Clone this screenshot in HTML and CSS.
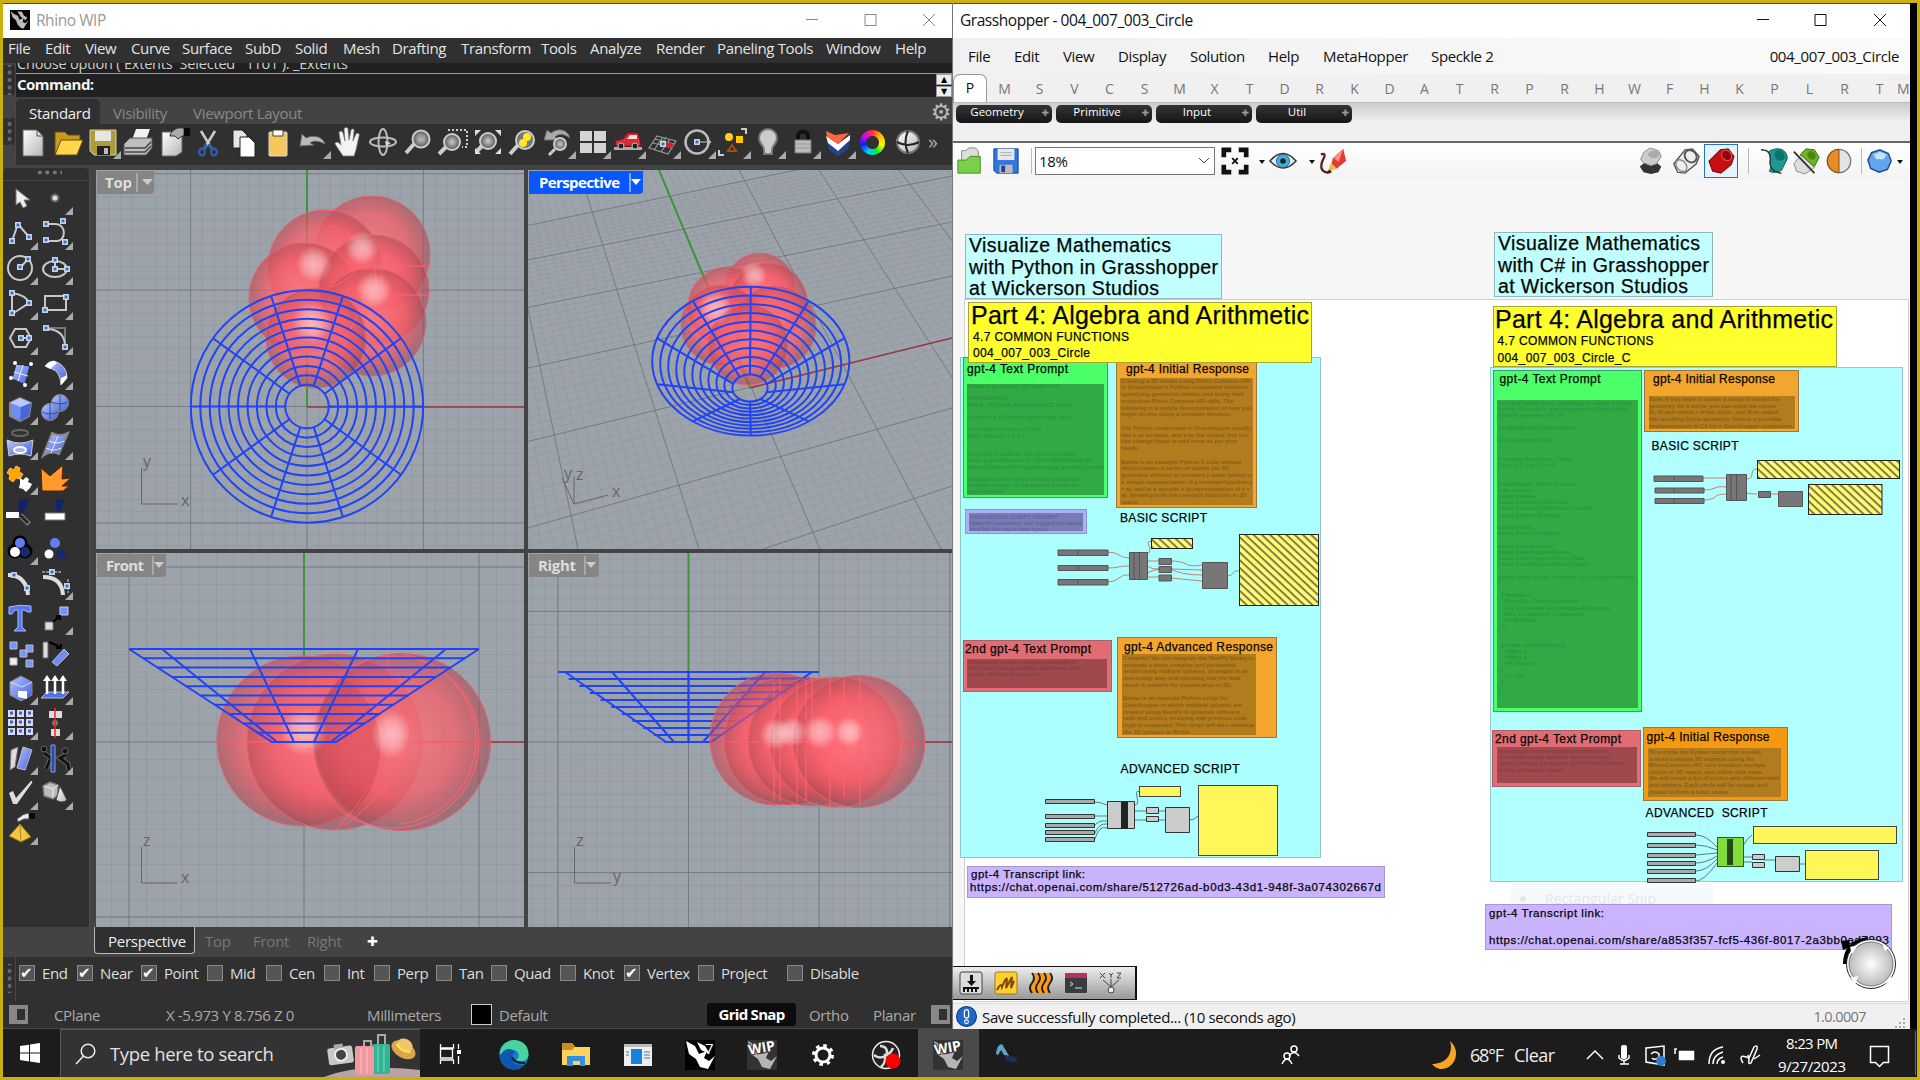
FILE: index.html
```html
<!DOCTYPE html>
<html lang="en">
<head>
<meta charset="utf-8">
<title>Rhino WIP and Grasshopper</title>
<link rel="stylesheet" href="styles.css">
</head>
<body>
<svg width="0" height="0" class="defs">
<defs>
<linearGradient id="gBlue" x1="0" y1="0" x2="1" y2="1"><stop offset="0" stop-color="#b9c6ff"/><stop offset="1" stop-color="#3f5fdc"/></linearGradient>
<linearGradient id="gGrey" x1="0" y1="0" x2="1" y2="1"><stop offset="0" stop-color="#fff"/><stop offset="1" stop-color="#b5b5b5"/></linearGradient>
<radialGradient id="gLens"><stop offset="0" stop-color="#ccc"/><stop offset="1" stop-color="#555"/></radialGradient>
<radialGradient id="ball" cx=".48" cy=".48" r=".54"><stop offset="0" stop-color="#ff7a83" stop-opacity=".8"/><stop offset=".6" stop-color="#f65e69" stop-opacity=".75"/><stop offset=".84" stop-color="#c9505b" stop-opacity=".68"/><stop offset="1" stop-color="#7e4951" stop-opacity=".5"/></radialGradient>
<radialGradient id="shine"><stop offset="0" stop-color="#fff" stop-opacity=".5"/><stop offset=".5" stop-color="#fff" stop-opacity=".35"/><stop offset="1" stop-color="#fff" stop-opacity="0"/></radialGradient>
<pattern id="hatch" width="6" height="5.6" patternUnits="userSpaceOnUse" patternTransform="rotate(43)"><rect width="6" height="5.6" fill="#ffff70"/><rect width="6" height="2" fill="#857850"/></pattern>
<symbol id="fly" viewBox="0 0 36 36"><path d="M36 27v8h-8z" fill="#aaa"/></symbol>
<g id="k"><rect x="-2.2" y="-2.2" width="4.400" height="4.400" fill="#4a68a8" stroke="#c7dcff" stroke-width="1.500"/></g>
<g id="rhino"><rect width="30" height="35"/><path class="rh" d="M1 2l3 11 5 5 2 7 5 6 4 2 8-15-5 5-4-2 1-7-6 3-2-7-6-3z"/><path class="rh" d="M11 2l5 10 7 6 3-5-5-3-3-7z"/></g>
</defs>
</svg>
<div class="screen">
<div class="windows">
<section class="rhino">
  <header class="titlebar dim"><svg class="app" width="20" height="20" viewBox="0 0 30 35" preserveAspectRatio="none"><use href="#rhino"/></svg><span class="name">Rhino WIP</span>
    <svg class="winbtn" width="130" height="20" viewBox="0 0 130 20"><path d="M2 9.500h12M61 4.500h11v11h-11zM119 4l12 12M131 4l-12 12"/></svg></header>
  <nav class="rmenu"><span>File</span><span>Edit</span><span>View</span><span>Curve</span><span>Surface</span><span>SubD</span><span>Solid</span><span>Mesh</span><span>Drafting</span><span>Transform</span><span>Tools</span><span>Analyze</span><span>Render</span><span>Paneling Tools</span><span>Window</span><span>Help</span></nav>
  <div class="cmd"><div class="dots"></div><div class="cmdbox"><div class="history"><span>Choose option ( Extents&nbsp; Selected&nbsp;&nbsp; 1To1 ): _Extents</span></div><div class="prompt"><b>Command:</b><div class="spin"><i>▲</i><i>▼</i></div></div></div></div>
  <div class="rtool"><div class="dots"></div><div class="rt">
    <div class="rtabs"><span class="on">Standard</span><span>Visibility</span><span>Viewport Layout</span><b>⚙</b></div>
    <div class="ricons">
<svg viewBox="0 0 36 36"><path d="M8 6h14l6 6v20H8z" fill="url(#gGrey)" stroke="#666"/><path d="M22 6v6h6" fill="none" stroke="#555"/></svg>
<svg viewBox="0 0 36 36"><path d="M5 30V8h10l3 3h12v5" fill="#c99a20" stroke="#694c00"/><path d="M5 31l6-15h22l-6 15z" fill="#ffd64c" stroke="#694c00"/></svg>
<svg viewBox="0 0 36 36"><path d="M5 6h26v25H9l-4-4z" fill="#ac9d3c" stroke="#d5d0a0"/><path d="M10 7h16v10H10z" fill="#e5e5e5"/><path d="M12 22h13v9H12z" fill="#222"/><path d="M19 24h4v6h-4z" fill="#bbb"/><use href="#fly"/></svg>
<svg viewBox="0 0 36 36"><path d="M12 16l4-11h14l-4 11z" fill="#f2f2f2"/><path d="M4 20l6-6h22v10l-6 7H4z" fill="#bdbdbd" stroke="#555"/><path d="M5 24h20l6-6M5 28h20l6-6" stroke="#444" stroke-width="1.500" fill="none"/></svg>
<svg viewBox="0 0 36 36"><path d="M7 8h12l8 3v17l-6 4H7z" fill="url(#gGrey)" stroke="#666"/><path d="M15 12c1-6 8-9 12-8h2v8h-2l-4 3-3-3z" fill="#aaa" stroke="#333"/><path d="M29 4h6v8h-6z" fill="#0a0a0a"/></svg>
<svg viewBox="0 0 36 36"><path d="M11 7l11 18M25 7L14 25" stroke="#ccc" stroke-width="2.500"/><path d="M16 20l-2 5M19 20l3 5" stroke="#2f5caa" stroke-width="3"/><ellipse cx="12" cy="28" rx="2.800" ry="3.500" fill="none" stroke="#2f5caa" stroke-width="2.500"/><ellipse cx="24" cy="28" rx="2.800" ry="3.500" fill="none" stroke="#2f5caa" stroke-width="2.500"/></svg>
<svg viewBox="0 0 36 36"><path d="M8 6h9l5 5v13H8z" fill="#e6e6e6" stroke="#222"/><path d="M15 13h9l6 6v14H15z" fill="#fff" stroke="#222"/></svg>
<svg viewBox="0 0 36 36"><rect x="9" y="8" width="18" height="24" rx="1" fill="#f6c75a" stroke="#d9d9d9"/><path d="M13 6h10v6H13z" fill="#fff" stroke="#444"/></svg>
<svg viewBox="0 0 36 36"><path d="M5 22l2-12 4 4c8-4 17-1 19 6-6-3-11-4-15-1l4 2z" fill="#bbb" stroke="#666"/><use href="#fly"/></svg>
<svg viewBox="0 0 36 36"><path d="M13 32l-8-12c0-3 4-2 6 1l-2-12c1-3 3-2 4 0l2 8-1-12c1-2 4-2 4 0l1 11 2-10c1-2 4-1 3 1l-1 10 3-7c2-2 4 0 3 2l-3 14-2 6z" fill="#f3f3f3" stroke="#777" stroke-width=".8"/></svg>
<svg viewBox="0 0 36 36" fill="none" stroke="#bbb" stroke-width="2"><ellipse cx="18" cy="18" rx="13" ry="4.500"/><ellipse cx="18" cy="18" rx="4.500" ry="13"/><path d="M20 17l6 2-5 3z" fill="#ddd" stroke="none"/></svg>
<svg viewBox="0 0 36 36"><path d="M14 20L6 29" stroke="#ccc" stroke-width="4"/><circle cx="21" cy="15" r="8.500" fill="url(#gLens)" stroke="#ccc" stroke-width="2"/><path d="M17 18h8M17 13h8M21 10v6" stroke="#999"/></svg>
<svg viewBox="0 0 36 36"><path d="M11 23l-7 7" stroke="#ccc" stroke-width="4"/><circle cx="17" cy="18" r="8" fill="url(#gLens)" stroke="#ccc" stroke-width="2"/><path d="M13 6h19v17h-5" fill="none" stroke="#ccc" stroke-width="2" stroke-dasharray="2 2"/></svg>
<svg viewBox="0 0 36 36"><path d="M12 22l-6 6" stroke="#ccc" stroke-width="4"/><circle cx="18" cy="17" r="8" fill="url(#gLens)" stroke="#ccc" stroke-width="2"/><path d="M5 6h6l-6 6zM25 6h6v6zM31 24v6h-6zM5 24v6h6z" fill="#ddd"/></svg>
<svg viewBox="0 0 36 36"><path d="M13 21L5 30" stroke="#ccc" stroke-width="4"/><circle cx="20" cy="16" r="9" fill="#777" stroke="#ccc" stroke-width="2"/><circle cx="22" cy="13" r="4" fill="#ffe72e"/><circle cx="18" cy="19" r="4" fill="#ffe72e"/></svg>
<svg viewBox="0 0 36 36"><path d="M4 16l3-10 4 3c8-6 17-3 19 5-6-4-11-5-15-1l3 3z" fill="#aaa" stroke="#666"/><path d="M15 25l-6 6" stroke="#ccc" stroke-width="3"/><circle cx="20" cy="20" r="6" fill="url(#gLens)" stroke="#ccc" stroke-width="2"/><use href="#fly"/></svg>
<svg viewBox="0 0 36 36"><path d="M5 7h12v10H5zM19 7h12v10H19zM5 19h12v10H5zM19 19h12v10H19z" fill="#d4d4d4"/><use href="#fly"/></svg>
<svg viewBox="0 0 36 36"><path d="M4 23h28v3H4z" fill="#aaa"/><path d="M5 17l8-2 5-6h10l2 7 1 6H6z" fill="#d82d36" stroke="#84141b"/><path d="M17 15l3-4h7v4z" fill="#edd"/><circle cx="11" cy="22" r="3" fill="#222" stroke="#bbb"/><circle cx="25" cy="22" r="3" fill="#222" stroke="#bbb"/><use href="#fly"/></svg>
<svg viewBox="0 0 36 36"><path d="M12 12l19 5-8 13L4 24zM8 19l20 5M10 15l19 5M18 13l-9 13M25 15l-9 13" fill="none" stroke="#999" stroke-width="1.200"/><path d="M20 20l8 2" stroke="#c22" stroke-width="4"/><path d="M18 18l3-5" stroke="#3a3" stroke-width="2"/><use href="#k" x="18" y="20"/><use href="#fly"/></svg>
<svg viewBox="0 0 36 36"><circle cx="17" cy="18" r="11.500" fill="none" stroke="#bbb" stroke-width="2.500"/><path d="M18 18h13m-4-3l4 3-4 3" fill="none" stroke="#bcd"/><use href="#k" x="17" y="18"/><use href="#fly"/></svg>
<svg viewBox="0 0 36 36"><circle cx="14" cy="13" r="4" fill="#ffd31a"/><path d="M21 12h7v7h-7z" fill="#ffc800"/><path d="M17 21l4 6h-8z" fill="none" stroke="#a64b16" stroke-width="2"/><path d="M26 5h5v5M4 26v5h5" fill="none" stroke="#ccc" stroke-width="2"/><use href="#fly"/></svg>
<svg viewBox="0 0 36 36"><path d="M14 26c0-5-5-6-5-12a9 9 0 0118 0c0 6-5 7-5 12v4h-8z" fill="#ccc" stroke="#777" stroke-width="2"/><use href="#fly"/></svg>
<svg viewBox="0 0 36 36"><path d="M13 17v-5c0-6 10-6 10 0v5" fill="none" stroke="#111" stroke-width="4"/><path d="M10 16h16v13H10z" fill="#bbb" stroke="#777"/><path d="M11 20h14M11 24h14" stroke="#999"/><use href="#fly"/></svg>
<svg viewBox="0 0 36 36"><path d="M7 18l11 9 12-11-2 9-10 7-9-6z" fill="#244491"/><path d="M6 12l12 8 12-9v5L18 27 8 19z" fill="#fff"/><path d="M6 7l9 4 14-2-11 11-11-7z" fill="#ff6540"/><use href="#fly"/></svg>
<div class="wheelcell"><i class="wheel"></i></div>
<svg viewBox="0 0 36 36"><circle cx="18" cy="18" r="11" fill="url(#gGrey)" stroke="#777" stroke-width="2"/><path d="M7 18q11 6 22 0M18 7q-5 11 0 22" fill="none" stroke="#222" stroke-width="2"/></svg>
<em>»</em>
    </div></div></div>
  <div class="rbody">
   <aside><div class="hdots"></div><div class="sicons">
<svg viewBox="0 0 36 36"><path d="M14 9v16l4-3 3 6 4-2-3-6h6z" fill="#eee" stroke="#777"/></svg>
<svg viewBox="0 0 36 36"><circle cx="18" cy="18" r="3.500" fill="#ddd" stroke="#666" stroke-width="2"/><use href="#fly"/></svg>
<svg viewBox="0 0 36 36"><path d="M10 26l6-17 11 13" class="ln"/><use href="#k" x="10" y="26"/><use href="#k" x="16" y="10"/><use href="#k" x="27" y="22"/><use href="#fly"/></svg>
<svg viewBox="0 0 36 36"><path d="M9 9h9c12 0 11 17 2 17H9" class="ln"/><use href="#k" x="9" y="9"/><use href="#k" x="26" y="6"/><use href="#k" x="9" y="25"/><use href="#k" x="28" y="27"/><use href="#fly"/></svg>
<svg viewBox="0 0 36 36"><circle cx="18" cy="18" r="12" class="ln"/><path d="M18 18l8-9" class="ln"/><use href="#k" x="18" y="17"/><use href="#k" x="26" y="9"/><use href="#fly"/></svg>
<svg viewBox="0 0 36 36"><ellipse cx="18" cy="19" rx="12" ry="8" class="ln"/><path d="M18 19V11M18 19h11" class="ln"/><use href="#k" x="18" y="10"/><use href="#k" x="18" y="19"/><use href="#k" x="30" y="19"/><use href="#fly"/></svg>
<svg viewBox="0 0 36 36"><path d="M10 8q14 2 17 10L10 29z" class="ln"/><use href="#k" x="10" y="8"/><use href="#k" x="27" y="18"/><use href="#k" x="10" y="28"/><use href="#fly"/></svg>
<svg viewBox="0 0 36 36"><path d="M8 11h21v14H8z" class="ln"/><use href="#k" x="29" y="12"/><use href="#k" x="8" y="25"/><use href="#fly"/></svg>
<svg viewBox="0 0 36 36"><path d="M13 9h11l5 9-5 9H13l-5-9z" class="ln"/><path d="M19 18h8" class="ln"/><use href="#k" x="19" y="18"/><use href="#k" x="27" y="18"/><use href="#fly"/></svg>
<svg viewBox="0 0 36 36"><path d="M9 8h19v18" fill="none" stroke="#777" stroke-width="2"/><path d="M9 9c12 0 19 6 19 18" class="ln"/><use href="#k" x="9" y="8"/><use href="#k" x="28" y="27"/><use href="#fly"/></svg>
<svg viewBox="0 0 36 36"><path d="M14 9l14 2-5 19-13-6z" fill="url(#gBlue)" stroke="#222"/><path d="M12 17l14 4M21 10l-5 16" stroke="#eef"/><g fill="#fff"><circle cx="13" cy="8" r="2"/><circle cx="29" cy="9" r="2"/><circle cx="9" cy="23" r="2"/><circle cx="23" cy="30" r="2"/></g><use href="#fly"/></svg>
<svg viewBox="0 0 36 36"><path d="M8 11q4-5 9-5 13 4 13 17l-6 7q-1-14-9-16z" fill="url(#gBlue)" stroke="#ccc"/><path d="M8 11q4-5 9-5l3 2-7 6zM24 23l6-3v3l-6 7z" fill="#fff"/><use href="#fly"/></svg>
<svg viewBox="0 0 36 36"><path d="M8 13l10-5 11 5-2 13-9 5-10-5z" fill="#6d8df5" stroke="#888" stroke-width="2"/><path d="M8 13l11 4 10-4-11-5z" fill="#b9caff"/><path d="M19 17l10-4-2 13-9 5z" fill="#4568d8"/><use href="#fly"/></svg>
<svg viewBox="0 0 36 36"><circle cx="23" cy="13" r="8.500" fill="url(#gBlue)" stroke="#888"/><circle cx="13" cy="22" r="8.500" fill="url(#gBlue)" stroke="#888"/><path d="M15 12q8 4 16 0M5 22q8 4 16 0M23 5v16M13 14v16" fill="none" stroke="#33508e"/><use href="#fly"/></svg>
<svg viewBox="0 0 36 36"><ellipse cx="18" cy="8" rx="8" ry="3" fill="none" stroke="#666" stroke-width="2"/><path d="M5 15q13 6 26 0l-2 16q-11-4-22 0z" fill="url(#gBlue)" stroke="#ccc"/><ellipse cx="18" cy="25" rx="6" ry="3" fill="#a9b4e8" stroke="#fff" stroke-width="2"/><use href="#fly"/></svg>
<svg viewBox="0 0 36 36"><path d="M15 8q8 4 16 0L22 29q-8-4-16 2z" fill="url(#gBlue)" stroke="#888" stroke-width="2"/><path d="M12 16q8 4 15 0M9 23q8 4 15 0M21 11l-7 17" fill="none" stroke="#eef"/><use href="#fly"/></svg>
<svg viewBox="0 0 36 36"><path d="M8 8l4 2 2-4 4 2-1 4 4 2-3 5-4-1-3 4-4-3 1-4-3-2z" fill="#ffa600" stroke="#fb5"/><path d="M18 18l3 2 3-3 3 2-1 3 4 2-2 4-4 4-3-3-4-1 1-4z" fill="#fff"/><use href="#fly"/></svg>
<svg viewBox="0 0 36 36"><path d="M4 8l9 8L26 5l-1 14 9-1-9 8 7 0-6 5H5z" fill="#ff9a2b" stroke="#5c1e00"/></svg>
<svg viewBox="0 0 36 36"><path d="M17 4h10l-6 15h-5z" fill="#12236b"/><path d="M4 17h13v6H4z" fill="#fff"/><path d="M18 20l9 9" stroke="#888" stroke-width="5"/><path d="M18 20l8 8" stroke="#222" stroke-width="3"/></svg>
<svg viewBox="0 0 36 36"><path d="M19 4h9l-5 14h-4z" fill="#12236b"/><path d="M8 18h20v7H8z" fill="#fff" stroke="#777"/></svg>
<svg viewBox="0 0 36 36"><g stroke="#000" stroke-width="5"><circle cx="18" cy="13" r="5"/><circle cx="13" cy="21" r="5"/><circle cx="23" cy="21" r="5"/></g><circle cx="18" cy="13" r="5" fill="#6080ef"/><circle cx="13" cy="22" r="5" fill="#fff"/><circle cx="23" cy="22" r="5" fill="#18286f"/><use href="#fly"/></svg>
<svg viewBox="0 0 36 36"><circle cx="18" cy="13" r="5" fill="#6080ef"/><circle cx="12" cy="24" r="4.500" fill="#fff"/><circle cx="24" cy="24" r="5" fill="#18286f"/></svg>
<svg viewBox="0 0 36 36"><path d="M6 10q18 0 20 20" class="ln3"/><use href="#k" x="12" y="10"/><use href="#k" x="25" y="23"/></svg>
<svg viewBox="0 0 36 36"><path d="M6 12q19 0 20 18" class="ln3"/><path d="M5 7h20M31 14v14" stroke="#ddd" stroke-dasharray="3 1"/><use href="#k" x="15" y="7"/><use href="#k" x="30" y="21"/><use href="#fly"/></svg>
<svg viewBox="0 0 36 36"><path d="M7 7q11-3 22-1v6h-3l-4-2h-2v17l4 4H12l4-4V10h-3l-3 4H7z" fill="#5777ed" stroke="#a9b9ff"/></svg>
<svg viewBox="0 0 36 36"><path d="M8 22h8v8H8z" fill="#ddd" stroke="#777"/><path d="M23 7h8v8h-8z" fill="#7290fa" stroke="#ccd"/><path d="M16 22l7-6m-4 0h4v4" fill="none" stroke="#000" stroke-width="2"/><use href="#fly"/></svg>
<svg viewBox="0 0 36 36"><g fill="#7895fa" stroke="#bbc"><path d="M8 7h7v7H8zM24 10h7v7h-7zM18 15h7v7h-7zM24 25h7v7h-7z"/><path d="M8 23h7v7H8z" fill="#eee"/></g></svg>
<svg viewBox="0 0 36 36"><path d="M6 7h5v16H6z" fill="#ddd" stroke="#666"/><path d="M15 27l12-13 5 5-12 12z" fill="#6f8df6" stroke="#bbc"/><path d="M12 7l11 5m-4 1h5v-4" fill="none" stroke="#000" stroke-width="2"/></svg>
<svg viewBox="0 0 36 36"><path d="M8 12l11-6 11 6v13l-11 6-11-6z" fill="url(#gBlue)" stroke="#888"/><path d="M8 12l12 5 10-5" fill="none" stroke="#cdf"/><path d="M16 21h9v8l-9-2z" fill="#fff"/><use href="#fly"/></svg>
<svg viewBox="0 0 36 36"><path d="M4 28l6-6h22l-6 6z" fill="#5070e8" stroke="#bbc"/><path d="M10 24V9M18 24V9M26 24V9" stroke="#fff" stroke-width="2.500"/><path d="M6 11l4-6 4 6zM14 11l4-6 4 6zM22 11l4-6 4 6z" fill="#fff"/><use href="#fly"/></svg>
<svg viewBox="0 0 36 36"><path d="M6 5h7v7H6zM15 5h7v7h-7zM24 5h7v7h-7zM6 14h7v7H6zM15 14h7v7h-7zM24 14h7v7h-7zM6 23h7v7H6zM15 23h7v7h-7zM24 23h7v7h-7z" fill="#d4dafa"/><path d="M8 8h3M17 8h3M26 8h3M8 17h3M17 17h3M26 17h3M8 26h3M17 26h3M26 26h3" stroke="#4a5fb0" stroke-width="3"/><use href="#fly"/></svg>
<svg viewBox="0 0 36 36"><path d="M12 6h13v7H12zM14 24h9v7h-9z" fill="#ddd"/><circle cx="18" cy="18" r="3" fill="#777"/><path d="M18 3v30" stroke="#f22" stroke-width="1.500"/><use href="#fly"/></svg>
<svg viewBox="0 0 36 36"><path d="M9 10l7-3-3 20-5 3z" fill="#ddd" stroke="#777"/><path d="M21 7l9 3-7 20-8-2z" fill="url(#gBlue)" stroke="#bbc"/><use href="#fly"/></svg>
<svg viewBox="0 0 36 36"><g fill="none" stroke="#666" stroke-width="5"><path d="M7 13l7 5-5 11M29 15l-6 3 8 6 1 6"/></g><g fill="none" stroke="#111" stroke-width="3"><path d="M7 13l7 5-5 11M29 15l-6 3 8 6 1 6"/></g><circle cx="7" cy="9" r="3" fill="#111" stroke="#666"/><circle cx="28" cy="11" r="3" fill="#111" stroke="#666"/><path d="M14 5h4v27h-4z" fill="#2b4ba0" stroke="#8ba0d8"/><use href="#fly"/></svg>
<svg viewBox="0 0 36 36"><path d="M7 18l4-2 3 7L29 6q2 0 1 2L15 29h-4z" fill="#ddd"/><use href="#fly"/></svg>
<svg viewBox="0 0 36 36"><path d="M6 11l7-4 8 3v10l-5 4-9-3z" fill="#bbb" stroke="#777" stroke-width="1.500"/><path d="M7 11l9 3 5-4M16 14v9" fill="none" stroke="#eee"/><path d="M23 11l7 14q-5 4-11 0z" fill="url(#gGrey)" stroke="#444"/><use href="#fly"/></svg>
<svg viewBox="0 0 36 36"><path d="M15 9q7-6 12-6v6h-5l-6 3z" fill="#eee" stroke="#555"/><path d="M27 3h6v6h-6z" fill="#0a0a0a"/><path d="M18 14l11 13-10 5-12-6z" fill="#f5c542" stroke="#8a6a10"/><path d="M18 14l1 18" stroke="#b08a20"/><use href="#fly"/></svg>
   </div></aside>
   <div class="views">
<svg viewBox="96 170 428 379">
 <rect x="96" y="170" width="428" height="379" class="vbg"/><path class="minor" data-grid="307 406.5 11.64"/><path class="major" data-grid="307 406.5 116.4"/>
 <path d="M307 406V170" class="gax"/><path d="M307 407h217" class="rax"/>
 <g class="balls"><circle cx="372" cy="254" r="58"/><circle cx="325" cy="267" r="57"/><circle cx="304" cy="298" r="55"/><circle cx="374" cy="290" r="55"/><circle cx="372" cy="322" r="54"/><circle cx="316" cy="338" r="50"/></g>
 <path d="M368 247a58 58 0 01-36 40M330 226a57 57 0 0144 72M261 312a50 50 0 0098-5M348 269h34v28M372 266h57M375 295h52" class="seam"/>
 <circle cx="362" cy="248" r="17" fill="url(#shine)"/><circle cx="314" cy="264" r="18" fill="url(#shine)"/><circle cx="374" cy="290" r="18" fill="url(#shine)"/><circle cx="312" cy="322" r="20" fill="url(#shine)"/>
 <g class="wire" data-rings="307 406.5 21.7 21.7 307 406.5 116.2 116.2 18"></g>
 <path class="gnomon" d="M141.500 468v36h36"/><text class="ax" x="143" y="467">y</text><text class="ax" x="181" y="506">x</text>
 <g><path d="M97 171h57v19q0 4-4 4H97z" fill="#858585"/><path d="M137 173v19" stroke="#ccc"/><path d="M142 179h11l-5.500 6z" fill="#ccc"/><text class="vt" x="105" y="188" textLength="27">Top</text></g>
</svg>
<svg viewBox="528 170 424 379">
 <rect x="528" y="170" width="424" height="379" class="vbg"/><path class="minor" data-persp="0.1"/><path class="major" data-persp="1"/>
 <path d="M750 388L659 170" class="gax"/>
 <g class="balls"><circle cx="760" cy="288" r="35"/><circle cx="728" cy="307" r="40"/><circle cx="768" cy="302" r="39"/><circle cx="721" cy="325" r="40"/><circle cx="775" cy="327" r="41"/><circle cx="748" cy="345" r="40"/></g>
 <circle cx="754" cy="275" r="13" fill="url(#shine)"/><circle cx="715" cy="308" r="17" fill="url(#shine)"/>
 <path d="M750 388l202-50" class="rax"/>
 <g class="wire" data-rings="750 388 17.6 13.6 750.8 361.2 98.6 74.4 0"></g>
 <path class="gnomon" d="M562 478l12 26 34-9M574 504v-28"/><text class="ax" x="564" y="479">y</text><text class="ax" x="576" y="480">z</text><text class="ax" x="612" y="497">x</text>
 <g><path d="M529 171h114v19q0 4-4 4H529z" fill="#0757fa"/><path d="M630 173v19" stroke="#fff"/><path d="M631 179h10l-5 6z" fill="#fff"/><text class="vt w" x="539" y="188" textLength="81">Perspective</text></g>
</svg>
<svg viewBox="96 553 428 374">
 <rect x="96" y="553" width="428" height="374" class="vbg"/><path class="minor" data-grid="304 742 17.5"/><path class="major" data-grid="304 742 175"/>
 <path d="M304 742V553" class="gax"/><path d="M304 742h220" class="rax"/>
 <g class="balls"><circle cx="302" cy="741" r="85"/><circle cx="335" cy="742" r="88"/><circle cx="402" cy="742" r="88.500"/></g>
 <circle cx="393" cy="742" r="86" class="seam"/><path d="M217 742h274M402 654a88 88 0 0174 90 85 85 0 01-76 80M386 654q30 90-50 176M396 680q45 70-50 145" class="seam"/>
 <path d="M342 676a85 85 0 0138 66 90 90 0 01-26 70 88 88 0 01-12-136z" fill="#b53c48" opacity=".3"/>
 <circle cx="304" cy="732" r="24" fill="url(#shine)"/><ellipse cx="391" cy="734" rx="20" ry="24" fill="url(#shine)"/>
 <g class="wire" data-frustum="304 649 742 175 33"><path d="M129 649l143 93M162 649l115 93M250 649l44 93M358 649l-44 93M446 649l-115 93M479 649l-143 93"/></g>
 <path class="gnomon" d="M141.500 847v36h36"/><text class="ax" x="143" y="846">z</text><text class="ax" x="181" y="883">x</text>
 <g><path d="M97 554h69v19q0 4-4 4H97z" fill="#858585"/><path d="M153 556v19" stroke="#ccc"/><path d="M154 562h10l-5 6z" fill="#ccc"/><text class="vt" x="106" y="571" textLength="38">Front</text></g>
</svg>
<svg viewBox="528 553 424 374">
 <rect x="528" y="553" width="424" height="374" class="vbg"/><path class="minor" data-grid="688.5 742 13.06"/><path class="major" data-grid="688.5 742 130.6"/>
 <path d="M688.500 742V553" class="gax"/><path d="M688 742h264" class="rax"/>
 <g class="wire" data-frustum="688.5 672 742 130.5 24"><path d="M565 672l101 70M612 672l62 70M688.500 672v70M765 672l-62 70M812 672l-101 70"/></g>
 <g class="balls"><circle cx="776" cy="739" r="66"/><circle cx="788" cy="741" r="64"/><circle cx="812" cy="742" r="64"/><circle cx="835" cy="742" r="65"/><circle cx="859" cy="741.500" r="66"/></g>
 <path d="M711 742h214M774 682v119M780 678v124M797 680v122M806 680v120M812 678v60M830 677v128M844 678v120M860 676v130" class="seam"/>
 <circle cx="776" cy="734" r="16" fill="url(#shine)"/><circle cx="792" cy="732" r="15" fill="url(#shine)"/><circle cx="820" cy="732" r="17" fill="url(#shine)"/><circle cx="849" cy="732" r="15" fill="url(#shine)"/>
 <g class="wire" opacity=".35"><path d="M688 672h131M740 678h70M740 685h55M740 692h46M735 699h40M730 706h35M765 672l-62 70M812 672l-101 70"/></g>
 <path class="gnomon" d="M574.500 847v36h36"/><text class="ax" x="576" y="846">z</text><text class="ax" x="613" y="882">y</text>
 <g><path d="M529 554h70v19q0 4-4 4H529z" fill="#858585"/><path d="M585 556v19" stroke="#ccc"/><path d="M586 562h10l-5 6z" fill="#ccc"/><text class="vt" x="538" y="571" textLength="38">Right</text></g>
</svg>
   </div>
  </div>
  <div class="vtabs"><span class="on">Perspective</span><span>Top</span><span>Front</span><span>Right</span><b>✚</b></div>
  <div class="osnap"><div class="dots"></div><div class="checks"><label class="c">End</label><label class="c">Near</label><label class="c">Point</label><label>Mid</label><label>Cen</label><label>Int</label><label>Perp</label><label>Tan</label><label>Quad</label><label>Knot</label><label class="c">Vertex</label><label>Project</label><label>Disable</label></div></div>
  <footer class="rstatus"><i class="pane"></i><span>CPlane</span><span>X -5.973 Y 8.756 Z 0</span><span>Millimeters</span><i class="sw"></i><span>Default</span><b>Grid Snap</b><span>Ortho</span><span>Planar</span><i class="pane"></i></footer>
</section>
<section class="gh">
  <header class="titlebar"><span class="name">Grasshopper - 004_007_003_Circle</span><svg class="winbtn" width="132" height="20" viewBox="0 0 132 20"><path d="M2 9.500h12M60 4.500h11v11h-11zM119 4l12 12M131 4l-12 12"/></svg></header>
  <nav class="gmenu"><span>File</span><span>Edit</span><span>View</span><span>Display</span><span>Solution</span><span>Help</span><span>MetaHopper</span><span>Speckle 2</span><span class="r">004_007_003_Circle</span></nav>
  <div class="gtabs"><b>P</b><i>M</i><i>S</i><i>V</i><i>C</i><i>S</i><i>M</i><i>X</i><i>T</i><i>D</i><i>R</i><i>K</i><i>D</i><i>A</i><i>T</i><i>R</i><i>P</i><i>R</i><i>H</i><i>W</i><i>F</i><i>H</i><i>K</i><i>P</i><i>L</i><i>R</i><i>T</i><i>M</i></div>
  <div class="ribbon"><span>Geometry</span><span>Primitive</span><span>Input</span><span>Util</span></div>
  <div class="gtool">
<svg viewBox="0 0 30 30"><path d="M6 12V4h4l4-3h7l3 4v18H7z" fill="#ddd" stroke="#888"/><path d="M2 14h9l4-4h11v18H2z" fill="#7bd04a" stroke="#3f8d20"/></svg>
<svg viewBox="0 0 30 30"><path d="M2 2h26v26H5l-3-3z" fill="#2f76e0" stroke="#123f91"/><path d="M6 2h18v12H6z" fill="#e8e8e8"/><path d="M8 19h14v9H8z" fill="#bbb"/><path d="M10 20h4v7h-4z" fill="#223f80"/><path d="M9 6h12M9 9h12" stroke="#aaa"/></svg>
<hr><div class="combo">18%<svg width="12" height="8"><path d="M1 1l5 5 5-5" fill="none" stroke="#444"/></svg></div>
<svg viewBox="0 0 30 30"><path d="M3 11V3h8M19 3h8v8M27 19v8h-8M11 27H3v-8" fill="none" stroke="#111" stroke-width="5"/><path d="M12 12l6 6M18 12l-6 6" stroke="#111" stroke-width="2"/></svg><u></u>
<svg viewBox="0 0 30 30"><path d="M1 15Q15-1 29 15 15 30 1 15z" fill="#d8f0fb" stroke="#333" stroke-width="1.500"/><circle cx="15" cy="15" r="7" fill="#4aa9d8" stroke="#17688f"/><circle cx="15" cy="15" r="3" fill="#032"/></svg><u></u>
<svg viewBox="0 0 30 30"><path d="M2 8q6-2 3 4-6 12 2 15l5 0" fill="none" stroke="#522" stroke-width="2.500"/><path d="M12 22l3-10L26 2l3 13-10 8z" fill="#e23b31"/><path d="M16 12L26 2l-5 14z" fill="#ff8d80"/><path d="M9 27l4-10 6 6z" fill="#f2b84b"/><path d="M8 29l3-5 3 3z" fill="#411"/></svg><s></s>
<svg viewBox="0 0 30 30"><path d="M3 21l5-4h13l5 4-3 6-8 2-8-2z" fill="#333"/><path d="M7 6l7-5 9 3 3 6-5 8-6 2-8-3-3-4z" fill="#ccc" stroke="#888"/><ellipse cx="18" cy="8" rx="6" ry="4" fill="#aaa"/></svg>
<svg viewBox="0 0 30 30"><path d="M2 18L14 3l8-1 7 8-3 8-12 10-8-1z" fill="#eee" stroke="#555" stroke-width="1.500"/><ellipse cx="20" cy="10" rx="6" ry="7" transform="rotate(-40 20 10)" fill="none" stroke="#555" stroke-width="2"/><ellipse cx="10" cy="20" rx="5" ry="7" transform="rotate(-40 10 20)" fill="none" stroke="#888" stroke-width="1.500"/></svg>
<div class="sel"><svg viewBox="0 0 30 30"><path d="M2 15L14 3l9-1 6 8-3 9-11 9-9-2z" fill="#c60f12" stroke="#650000"/><ellipse cx="21" cy="9" rx="5" ry="6" transform="rotate(-40 21 9)" fill="#8e0609" stroke="#e55"/></svg></div><hr>
<svg viewBox="0 0 30 30"><path d="M9 5q8-5 15-2 6 4 5 10l-6 12q-8 4-13 1 3-4 1-9 2-7-2-12z" fill="#1a9a92" stroke="#065b57"/><path d="M1 3q11 0 10 11-2 12 12 14" fill="none" stroke="#333" stroke-width="1.500"/><ellipse cx="21" cy="9" rx="5" ry="6" transform="rotate(-40 21 9)" fill="#10706b"/></svg>
<svg viewBox="0 0 30 30"><path d="M2 18l8-10 14 14-10 7-9-3z" fill="#ddd" stroke="#888"/><path d="M9 8l6-6 9 1 5 8-5 10z" fill="#6fb324" stroke="#2e6a05"/><ellipse cx="21" cy="9" rx="4" ry="5" transform="rotate(-40 21 9)" fill="#4a8611"/><path d="M2 5l22 23" stroke="#333" stroke-width="2"/></svg>
<svg viewBox="0 0 30 30"><circle cx="15" cy="15" r="12.500" fill="#e4e4e4" stroke="#777" stroke-width="1.500"/><path d="M15 2.500a12.500 12.500 0 000 25z" fill="#e88b22" stroke="#7c4510"/></svg><hr>
<svg viewBox="0 0 30 30"><path d="M15 3l9 4 3 8-4 9-9 3-9-4-3-9 4-8z" fill="#62a5ee" stroke="#204b8a" stroke-width="1.500"/><path d="M8 8l7-3 7 3-3 5h-8z" fill="#c5e2ff"/></svg><u></u>
  </div>
  <div class="canvas">
<svg viewBox="953 180 957 823" width="957" height="823">
<defs><radialGradient id="comp"><stop offset="0" stop-color="#fff"/><stop offset="1" stop-color="#bbb"/></radialGradient></defs>
<rect x="953" y="180" width="957" height="823" fill="#f6f6f6"/><rect x="964.500" y="299.500" width="944" height="702" fill="#fff" stroke="#d0d0d0"/>
<g>
<rect x="960.500" y="357.500" width="360" height="500" fill="#acffff" stroke="#92c6c6"/><rect x="1490.500" y="367.500" width="412" height="514" fill="#b2ffff" stroke="#9bc9c9"/>
<rect x="965.500" y="234.500" width="256" height="64" fill="#c2ffff" stroke="#8db9bb"/><rect x="1494.500" y="232.500" width="218" height="64" fill="#c2ffff" stroke="#8db9bb"/>
<rect x="963.500" y="357.500" width="144" height="140" fill="#4bff68" stroke="#3e9b74"/><rect x="1116.500" y="360.500" width="140" height="147" fill="#f2a62d" stroke="#967840"/>
<rect x="968.500" y="302.500" width="343" height="60" fill="#ffff2d" stroke="#a5a53c"/><rect x="1493.500" y="306.500" width="343" height="60" fill="#ffff2d" stroke="#a5a53c"/>
<rect x="965.500" y="509.500" width="121" height="24" fill="#aab0f5" stroke="#8a94d4"/><rect x="963.500" y="640.500" width="148" height="51" fill="#e06c74" stroke="#ad5f68"/><rect x="1117.500" y="637.500" width="159" height="100" fill="#f2a62d" stroke="#967840"/>
<rect x="1493.500" y="370.500" width="148" height="341" fill="#4bff68" stroke="#3e9b74"/><rect x="1644.500" y="370.500" width="154" height="61" fill="#f2a62d" stroke="#967840"/>
<rect x="1492.500" y="730.500" width="148" height="56" fill="#e06c74" stroke="#ad5f68"/><rect x="1643.500" y="727.500" width="144" height="73" fill="#f59a10" stroke="#967840"/>
<rect x="967.500" y="866.500" width="417" height="31" fill="#cab4ff" stroke="#a796cf"/>
</g>
<g><path d="M967 384h137v111H967zM1497 400h141v308h-141z" fill="#31aa46"/><path d="M1120 378h133v127h-133zM1122 654h134v81h-134zM1649 396h146v33h-146zM1648 748h133v49h-133z" fill="#b27c1e"/><path d="M969 513h114v18H969z" fill="#777cb4"/><path d="M967 659h140v29H967zM1497 747h140v36h-140z" fill="#9f494f"/></g>
<g class="t">
<g style="font-size:19.500px"><text x="969" y="252" textLength="202">Visualize Mathematics</text><text x="969" y="273.500" textLength="249">with Python in Grasshopper</text><text x="969" y="295" textLength="190">at Wickerson Studios</text><text x="1498" y="250" textLength="202">Visualize Mathematics</text><text x="1498" y="271.500" textLength="211">with C# in Grasshopper</text><text x="1498" y="293" textLength="190">at Wickerson Studios</text></g>
<g style="font-size:25px"><text x="971" y="324" textLength="338">Part 4: Algebra and Arithmetic</text><text x="1495" y="328" textLength="338">Part 4: Algebra and Arithmetic</text></g>
<g style="font-size:12px"><text x="973" y="340.500" textLength="156">4.7 COMMON FUNCTIONS</text><text x="973" y="357" textLength="117">004_007_003_Circle</text><text x="1497.500" y="345" textLength="156">4.7 COMMON FUNCTIONS</text><text x="1497.500" y="361.500" textLength="133">004_007_003_Circle_C</text>
<text x="967" y="373" textLength="101">gpt-4 Text Prompt</text><text x="1126" y="373" textLength="123">gpt-4 Initial Response</text><text x="1120" y="522" textLength="87">BASIC SCRIPT</text>
<text x="965" y="653" textLength="126">2nd gpt-4 Text Prompt</text><text x="1124" y="650.500" textLength="149">gpt-4 Advanced Response</text><text x="1120.500" y="773" textLength="119">ADVANCED SCRIPT</text>
<text x="1499.500" y="383" textLength="101">gpt-4 Text Prompt</text><text x="1653" y="383" textLength="122">gpt-4 Initial Response</text><text x="1651.500" y="450" textLength="87">BASIC SCRIPT</text>
<text x="1495" y="743" textLength="126">2nd gpt-4 Text Prompt</text><text x="1646.500" y="741" textLength="123">gpt-4 Initial Response</text><text x="1645.500" y="817" textLength="122" xml:space="preserve">ADVANCED  SCRIPT</text></g>
<g style="font-size:11.500px"><text x="971" y="878" textLength="114">gpt-4 Transcript link:</text><text x="970" y="891" textLength="411">https://chat.openai.com/share/512726ad-b0d3-43d1-948f-3a074302667d</text></g>
</g>
<g class="fine og"><g data-lines="1121 382.5 6.76 131">Creating a 3D model using Rhino Common API|in Grasshopper's Python component involves|specifying geometric entities and using their|respective Rhino Common API calls. The|following is a simple demonstration of how you|might do this using a constant function.||The Python component in Grasshopper usually|has x as an input, and a as the output, but you|can change these or add more as per your|needs.||Below is an example Python 3 code snippet|which creates a series of planes (as 3D|geometric entities) at constant y value (which is|a simple representation of a constant function y|= a), and at a specific x (a representation of x =|a), showing both are constant functions in 3D|space.</g>
<g data-lines="1123 660 6.7 131">Certainly! We can integrate the RemPy library to|generate a more complex and parametric|model using multiple spheres, arranged in an|interesting way, and ensuring that the final|result is suitable for visualization in 3D.||Below is an example Python script for|Grasshopper in which multiple spheres are|created using RemPy to generate different|radii and colors, ensuring that previous code|logic is respected. This script will also visualize|the 3D spheres in Rhino.</g>
<g data-lines="1649 401 6.7 145">Sure, if you want to create a script to model the|geometry for a circle, you can input the center|(h, k) and radius r of the circle, and then output|the resulting Circle geometry. Here is a possible|implementation in C# for a Grasshopper component.</g>
<g data-lines="1649 754 6.6 130">To provide the Python script that models|a more complex 3D example using the|RhinoCommon API, let's visualize multiple|circles in 3D space, and utilize data trees.|We will create a list of circles with different radii|and centers. Each circle will be unique and|placed to form a torus shape.</g></g>
<g class="fine gn"><g data-lines="967 388 6.2 137">Create a geometric 3D model with||MATHEMATICS|AREA, VOLUME AND SURFACE AREA||to create a 3D model specifically as an||Common Functions: Circle|Grid: original: 6 x 4 a|||In python 3 code for the python 3 editor|node in grasshopper for RhinoWIP8 using the|Rhino Common API to create unique geometry as well||Output the parts of the model to different|variable outputs of the python 3 node in|grasshopper.</g>
<g data-lines="1498 405 6.2 139">and that model there, including to create a script|for the C# node in grasshopper for Rhino8 that|models geometry for the||ALGEBRA AND ARITHMETIC||and specifically the|||Common Functions: Circle|Grid: x^2 + y^2 = r^2|||Grasshopper Script Instance|// No usings|using System;|using System.Collections;|using System.Collections.Generic;|using System.Drawing;||using Rhino;|using Rhino.Geometry;||using Grasshopper;|using Grasshopper.Kernel;|using Grasshopper.Kernel.Data;|using Grasshopper.Kernel.Types;||public class Script_Instance : GH_ScriptInstance|{||  /*Members:|    RhinoDoc RhinoDocument|    GH_Document GrasshopperDocument|    IGH_Component Component|    int Iteration|  */|||  private void RunScript(|    object x,|    object y,|    ref object a)|  {|    a = null;|  }|}</g></g>
<g class="fine bl"><g data-lines="970 518.500 6.2 112">PARAMETRIC SCRIPT PROMPT|Make this parametric and suggest the values|and list the input data types.</g></g>
<g class="fine rd"><g data-lines="968 664 6.2 137">Now create a more complex example of|the model, using multiple data trees and|script utilising list access</g><g data-lines="1498 753 6.2 137">Now create a more complex example of|the model, using multiple data trees and|script utilising list access and RhinoCommon|for the advanced visual.</g></g>
<g class="wires"><path d="M1107 552q8 0 12 3t10 3M1107 568q8 0 11-1t11-1M1107 582q8 0 12-4t10-3M1147 554q5-2 2-8t3-4M1147 561h12M1147 566q6 4 12 3M1147 573q6-3 12-4M1147 577h12M1171 561q10 0 15 3t16 1M1171 569l31 1M1171 569q10 6 31 6M1171 578l31 3M1227 576q5 0 6-3t6-2"/>
<path d="M1703 478h23M1704 490q8 0 11-2t11-1M1704 500q8 0 11-3t11-3M1746 479q6 0 6-5t5-5M1746 493q5 1 11 1M1770 494h8"/></g>
<g class="wires k"><path d="M1095 802q5 0 12 3M1095 816h12M1095 825q4-5 12-4M1095 833q4-10 12-9M1095 839q4-14 12-11M1135 805q4 0 2-8t3-5M1135 811h11M1135 820h11M1158 811h7M1158 820h7M1189 820q6 0 9-4M1696 835q10 0 21 12M1696 845q10 0 21 5M1696 855l21-2M1696 863q10 0 21-7M1696 871q10 0 21-12M1696 881q8 0 21-18M1743 846q4-8 9-11M1743 857h9M1743 862h9M1764 860h11M1799 864h6"/></g>
<g class="nodes"><path d="M1058 550h50v5.500h-50zM1058 565.500h50v5h-50zM1058 579.500h50v5.500h-50zM1129.500 552.500h18v27h-18zM1159 558.500h12.500v6H1159zM1159 566.500h12.500v6H1159zM1159 575h12.500v6H1159zM1202.500 562.500h25v26h-25zM1654 476h49v5.500h-49zM1655 488h49v5h-49zM1655 498.500h49v5h-49zM1726.500 474.500h20v26h-20zM1758.500 491.500h12v6h-12zM1778.500 491.500h24v15h-24z"/><path d="M1078 550v5M1078 566v5M1078 580v5M1134 553v26M1139.500 553v26M1674 476v5M1674 488v5M1674 498v5M1731 475v25M1736.500 475v25" stroke="#444"/></g>
<g fill="url(#hatch)" stroke="#222"><rect x="1151.500" y="538.500" width="41" height="10"/><rect x="1239.500" y="534.500" width="79" height="71"/><rect x="1757.500" y="460.500" width="142" height="18"/><rect x="1808.500" y="484.500" width="73.500" height="30"/></g>
<g fill="#fff759" stroke="#444"><rect x="1139.500" y="786.500" width="41" height="10"/><rect x="1198.500" y="785.500" width="79" height="70"/><rect x="1753.500" y="826.500" width="143" height="17"/><rect x="1805.500" y="850.500" width="73" height="29"/></g>
<g fill="#aaa" stroke="#333" stroke-width="1"><path d="M1045.500 799.500h49v4h-49zM1045.500 814.500h49v4h-49zM1045.500 823.500h49v4h-49zM1045.500 830.500h49v4h-49zM1045.500 837.500h49v4h-49zM1647.500 832.500h48v4h-48zM1647.500 843.500h48v4h-48zM1647.500 853.500h48v4h-48zM1647.500 861.500h48v4h-48zM1647.500 869.500h48v4h-48zM1647.500 878.500h48v4h-48z"/><path fill="#ccc" d="M1107.500 801.500h27v27h-27zM1146.500 807.500h12v6h-12zM1146.500 816.500h12v5h-12zM1165.500 807.500h24v25h-24zM1752.500 854.500h12v5h-12zM1752.500 862.500h12v5h-12zM1775.500 856.500h24v15h-24z"/></g>
<path d="M1121 802h7v27h-7z" fill="#222"/><rect x="1717.500" y="837.500" width="26" height="29" fill="#82dc3c" stroke="#286010"/><path d="M1727 839h6v26h-6z" fill="#254b15"/>
<rect x="1511" y="884" width="202" height="20" fill="#f5faff"/><circle cx="1523" cy="899" r="3" fill="#e1e8ec"/><text x="1545" y="904" textLength="111" class="ghost">Rectangular Snip</text>
<rect x="1485.500" y="904.500" width="406" height="45" fill="#cab4ff" stroke="#a796cf"/><g class="t" style="font-size:11.500px"><text x="1489" y="917" textLength="115">gpt-4 Transcript link:</text><text x="1489" y="944" textLength="400">https://chat.openai.com/share/a853f357-fcf5-436f-8017-2a3bb0ad7893</text></g>
<path d="M1845 964q0-22 23-25" fill="none" stroke="#000" stroke-width="4"/><path d="M1841 941l8-1 1 7-7 3z"/>
<circle cx="1871" cy="964" r="24.500" fill="#fff" stroke="#222"/><circle cx="1871" cy="964" r="22" fill="url(#comp)" stroke="#777"/><path d="M1852 954l6-9-8 2zM1882 943l3 8 4-3zM1891 975l-6 9 7-4zM1855 985l3-9-7 2z" fill="#fff"/>
</svg>
  <div class="dock">
<svg viewBox="0 0 24 24"><rect x="1" y="1" width="22" height="22" rx="2" fill="#ddd" stroke="#444"/><path d="M11 4h3v6h3l-4.500 5L8 10h3zM4 16h16v2H4zM4 18h2v3H4zM8 18h2v3H8zM12 18h2v3h-2zM16 18h2v3h-2z" fill="#111"/></svg>
<svg viewBox="0 0 24 24"><rect x="1" y="1" width="22" height="22" rx="2" fill="#ffd02b" stroke="#9a7a20"/><path d="M3 19q4-8 5-3 4-10 5-8l-1 9 6-11-1 11 3-7" fill="none" stroke="#7a4a10" stroke-width="2"/></svg>
<svg viewBox="0 0 24 24" fill="none"><path d="M4 2q4 5 0 10t0 10h16q-4-5 0-10t0-10z" fill="#ff9c16"/><path d="M3 2q4 5 0 10t0 10M9 2q4 5 0 10t0 10M15 2q4 5 0 10t0 10M21 2q4 5 0 10t0 10" stroke="#222" stroke-width="2"/></svg>
<svg viewBox="0 0 24 24"><rect x="1" y="2" width="22" height="20" rx="1" fill="#383c41"/><path d="M1 2h22v5H1z" fill="#b93060"/><path d="M6 11l3 2-3 2M11 17h7" stroke="#ddd" fill="none"/></svg>
<svg viewBox="0 0 24 24"><g fill="none" stroke="#444"><path d="M4 9l8 7 8-7M12 8v8"/><circle cx="12" cy="19" r="3" fill="#eee"/><path d="M1 2l5 5M6 2L1 7M10 2l2 2 2-2M12 4v3M18 2h4l-4 5h4"/></g></svg>
  </div>
  </div>
  <footer class="gstatus"><svg width="21" height="21" viewBox="0 0 20 20"><circle cx="10" cy="10" r="9.500" fill="#2367c5" stroke="#0b3b85"/><rect x="8" y="3.500" width="4" height="8" rx="2" fill="none" stroke="#fff" stroke-width="1.200"/><circle cx="10" cy="15" r="1.800" fill="none" stroke="#fff"/></svg><span>Save successfully completed... (10 seconds ago)</span><em>1.0.0007</em><svg class="grip" width="12" height="12" viewBox="0 0 12 12"><path d="M8 1h2v2H8zM8 5h2v2H8zM8 9h2v2H8zM4 5h2v2H4zM4 9h2v2H4zM0 9h2v2H0z" fill="#aaa"/></svg></footer>
</section>
</div>
<footer class="taskbar">
<div class="start"><svg width="20" height="20" viewBox="0 0 20 20"><path d="M0 3l9-1.300V9.500H0zM10 1.500L20 0v9.500H10zM0 10.500h9v8L0 17zM10 10.500h10V20l-10-1.500z" fill="#fff"/></svg></div>
<div class="search"><svg width="22" height="22" viewBox="0 0 22 22"><circle cx="13" cy="8" r="6.800" fill="none" stroke="#eee" stroke-width="1.500"/><path d="M8.500 13L1 21" stroke="#eee" stroke-width="1.500"/></svg><span>Type here to search</span>
<svg class="pic" width="96" height="46" viewBox="323 1031 96 46"><path d="M323 1077q34-14 96-7v7z" fill="#b9a3a3"/><g transform="rotate(-8 339 1055)"><rect x="327" y="1047" width="25" height="17" rx="2" fill="#c9c9c9"/><rect x="334" y="1044" width="9" height="5" fill="#aaa"/><circle cx="340" cy="1055" r="6" fill="#444" stroke="#eee" stroke-width="2"/></g><path d="M363 1047v-6h7v6M377 1045v-10h7v10" fill="none" stroke="#aaa" stroke-width="2"/><rect x="371" y="1044" width="18" height="30" rx="2" fill="#33b594"/><path d="M377 1046v26M383 1046v26" stroke="#79dec6"/><rect x="354" y="1046" width="19" height="29" rx="2" fill="#ef9a9f"/><path d="M360 1048v25M366 1048v25" stroke="#ffc5c8"/><g transform="rotate(30 403 1049)"><ellipse cx="403" cy="1050" rx="13" ry="8" fill="#d8a650"/><ellipse cx="402" cy="1045" rx="8" ry="6" fill="#f1c46b"/><path d="M394 1048q8 5 16 0" fill="none" stroke="#ffe04b" stroke-width="2.500"/></g></svg></div>
<svg class="task" width="1497" height="48" viewBox="420 1029 1497 48">
<rect x="918" y="1029" width="61" height="48" fill="#4a4a4a"/>
<g fill="none" stroke="#fff" stroke-width="1.300"><path d="M440.500 1044v4h13v-4M440.500 1064v-4h13v4M440.500 1049h12v9h-12zM458.500 1044v5M458.500 1056v8"/></g><rect x="457" y="1050" width="4" height="4" fill="#fff"/>
<circle cx="514" cy="1055" r="14.500" fill="#1678cf"/><path d="M499.500 1054c1-19 29-18 29 0 0 7-8 9-12 6 4-4 2-10-4-10-8 0-12 5-13 4z" fill="#48d3a2"/><path d="M500 1057c3-9 11-10 15-5-6 5-4 14 9 13-5 6-12 5-16 3-5-2-8-6-8-11z" fill="#0d58ae"/><path d="M512 1057q1 6 13 6" fill="none" stroke="#1c1c1c" stroke-width="2"/>
<path d="M562 1043h10l3 4h15v18h-28z" fill="#ffd35a"/><path d="M562 1043h10l3 4-3 3h-10z" fill="#c98f1c"/><path d="M567 1066v-10h18v10h-5v-5h-7v5z" fill="#338fe0"/>
<rect x="624" y="1044" width="28" height="22" fill="#eee"/><path d="M624 1044h28v3h-28z" fill="#bbb"/><rect x="631" y="1049" width="11" height="15" fill="#1681e0"/><path d="M644 1052h6M644 1055h6M644 1058h6M626 1052h3M626 1055h3" stroke="#4a7ba7"/>
<rect x="685" y="1040" width="30" height="30"/><path class="beast" d="M686 1041l3 13 7 5 4 8 8 2 7-13-6 5-5-3 3-7-8 3-4-8z"/><path class="beast" d="M697 1042l4 8 9 4-5-8z"/><text x="705" y="1054" class="seven">7</text>
<g class="gr"><rect x="747" y="1040" width="30" height="30"/><path class="beast" d="M748 1041l3 13 7 5 4 8 8 2 7-13-6 5-5-3 3-7-8 3-4-8z"/></g><text x="749" y="1055" class="wip" transform="rotate(-10 748 1054)" textLength="27">WIP</text>
<g class="gr"><rect x="933" y="1040" width="30" height="30"/><path class="beast" d="M934 1041l3 13 7 5 4 8 8 2 7-13-6 5-5-3 3-7-8 3-4-8z"/></g><text x="935" y="1055" class="wip" transform="rotate(-10 934 1054)" textLength="27">WIP</text>
<circle cx="823" cy="1055" r="7" fill="none" stroke="#fff" stroke-width="3"/><circle cx="823" cy="1055" r="9.500" fill="none" stroke="#fff" stroke-width="3" stroke-dasharray="3.500 3.960"/>
<circle cx="886" cy="1055" r="13.500" fill="#222" stroke="#eee" stroke-width="1.500"/><path d="M880 1046q8 0 7 9-7 5-13 0M893 1048q-3 7-8 7 1 8-4 12" fill="none" stroke="#ddd" stroke-width="2.500"/><circle cx="893" cy="1061" r="7.500" fill="#f00"/>
<path d="M996 1054q1-10 6-10l3 5 4 7-5-1-3-5-3 5z" fill="#62a4c4"/><path d="M1004 1055l14 3-4 5-8-3z" fill="#17305f"/>
<g fill="none" stroke="#fff" stroke-width="1.500"><circle cx="1294" cy="1049" r="3"/><path d="M1289 1056q5-7 10 0M1282 1064q5-10 10 0"/><circle cx="1287" cy="1056" r="3"/></g>
<path d="M1450 1041c12 10 5 29-10 28q-5-1-8-5c13 0 22-9 18-23z" fill="#f6a623"/>
<text x="1470" y="1062" class="tk" textLength="34">68°F</text><text x="1514" y="1062" class="tk" textLength="41">Clear</text>
<g fill="none" stroke="#fff" stroke-width="1.500"><path d="M1587 1059l8-8 8 8M1619 1055v3q5 5 10 0v-3M1624 1060v4M1620 1064h9M1646 1048l18-2v19l-18-3zM1651 1054q4-4 8 0v3M1659 1057q-4 4-7 1M1677 1049h-2v5M1709 1064q0-15 14-17M1713 1064q0-9 10-12M1717 1064q0-5 6-7M1743 1063q-6-10 6-5l5-11q4-3 3 2l-6 14q-3 2-2-3l-1-5M1754 1059l6-4"/><rect x="1679.500" y="1051.500" width="14" height="8" fill="#fff"/><path d="M1870.500 1046.500h18v16h-5l-4 4-4-4h-5z"/></g><rect x="1621" y="1045" width="6" height="14" rx="2" fill="#fff"/><circle cx="1661" cy="1061" r="5" fill="#2e7bd0"/><circle cx="1723" cy="1062" r="2" fill="#fff"/>
<text x="1786" y="1049" class="clk" textLength="52">8:23 PM</text><text x="1778" y="1072" class="clk" textLength="68">9/27/2023</text><path d="M1915.500 1031v44" stroke="#666"/>
</svg>
</footer>
</div>
<script src="scene.js"></script>
</body>
</html>
```
FILE: styles.css
```css
*{box-sizing:border-box}
body{margin:0;width:1920px;height:1080px;border:3px solid #c8b00f;border-top-color:#cbb010;background:#000;font-family:"Open Sans","Noto Sans",sans-serif;font-size:15px;overflow:hidden}
.defs{position:absolute}
i,em,u,s{font-style:normal;text-decoration:none}
.screen{display:flex;flex-direction:column;width:1914px;height:1074px}
.windows{display:flex;height:1026px}
.rhino{width:949px;background:#434343;color:#ddd;display:flex;flex-direction:column;overflow:hidden}
.gh{width:958px;background:#f0f0f0;color:#111;display:flex;flex-direction:column;border-left:1px solid #777;overflow:hidden}
.titlebar{height:35px;flex:none;background:#fff;display:flex;align-items:center;padding:0 18px 2px 7px;border-top:1px solid #554c1a;color:#111}
.gh .titlebar{padding:0 23px 2px 7px}
.titlebar .name{margin-right:auto;letter-spacing:-.45px;font-size:15.500px;white-space:nowrap}
.titlebar.dim .name{margin-left:6px;color:#999}
.winbtn{overflow:visible;fill:none;stroke:#111}
.dim .winbtn{stroke:#888}
.app{color:#bbb}
.rmenu{height:25px;flex:none;background:#303030;display:grid;grid-template-columns:37px 40px 46px 51px 63px 50px 48px 49px 69px 80px 49px 66px 61px 109px 69px 50px;padding-left:5px;align-items:start;line-height:21px;letter-spacing:-.35px;white-space:nowrap;color:#e4e4e4}
.dots{width:13px;flex:none;border-right:1px solid #484848;background:radial-gradient(circle,#6a6a6a 1.700px,transparent 2.200px) 1px 50%/11px 7.500px content-box #303030;background-repeat:repeat-y}
.cmd{display:flex;height:34px;flex:none}
.cmd .dots{padding:2px 0}
.cmdbox{flex:1;background:#212121}
.history{height:10px;overflow:hidden;display:flex;align-items:flex-end;font-size:14.500px;padding-left:1px;letter-spacing:-.2px;line-height:17px;color:#d0d0d0}
.history span{transform:translateY(-1px)}
.prompt{height:24px;border-top:1px solid #999;display:flex;align-items:center;justify-content:space-between;padding-left:1px;color:#f4f4f4}
.prompt b{letter-spacing:-.55px;line-height:19px;padding-bottom:3px}
.spin{width:16px;display:flex;flex-direction:column;gap:1px}
.spin i{height:11px;font:8px/10px "DejaVu Sans",sans-serif;background:#eee;color:#000;text-align:center;border:1px solid #999}
.rtool{display:flex;height:73px;flex:none;border-top:2px solid #434343;border-bottom:5px solid #434343}
.rtool .dots{padding:19px 0 20px}
.rt{flex:1;background:#303030}
.rtabs{height:25px;background:#434343;display:grid;grid-template-columns:84px 80px 140px 1fr;line-height:29px;color:#888;letter-spacing:-.3px}
.rtabs span{padding-left:13px}
.rtabs .on{background:#303030;color:#eee;border-radius:5px 5px 0 0}
.rtabs b{text-align:right;font:23px/26px "DejaVu Sans";color:#bbb;padding-right:1px}
.ricons{height:34px;display:grid;grid-template-columns:repeat(26,35px) 20px;margin-left:-1px;align-items:center}
.ricons svg,.sicons svg{width:36px;height:36px;overflow:visible}
.ricons em{font-size:20px;line-height:20px;color:#aaa;padding-left:3px}
.wheelcell{display:flex;justify-content:center}
.wheel{width:25px;height:25px;border-radius:50%;background:radial-gradient(circle,#303030 6px,transparent 7px),conic-gradient(#f33,#fb0,#ff0,#0e3,#0cf,#02f,#d0f,#f33)}
.rbody{display:flex;height:757px;flex:none}
aside{width:87px;margin:-2px 6px 0 0;background:#303030;border-right:1px solid #4b4b4b;border-radius:5px 5px 0 0}
.hdots{height:13px;border-bottom:1px solid #484848;margin-bottom:-1px;background:radial-gradient(circle,#777 1.700px,transparent 2.200px) 32px 0/7.500px 9px repeat-x content-box;padding:0 27px 0 31px}
.sicons{display:grid;grid-template-columns:35px 35px;grid-auto-rows:35px;margin-left:-1px}
.ln{fill:none;stroke:#c8c8c8;stroke-width:2}
.ln3{fill:none;stroke:#ddd;stroke-width:4}
.views{display:grid;grid-template-columns:428px 424px;grid-template-rows:379px 374px;column-gap:4px;row-gap:4px}
.views svg{display:block;width:100%;height:100%}
.vbg{fill:#9da3aa}
.minor{fill:none;stroke:#7e8790;stroke-width:.6;opacity:.45}
.major{fill:none;stroke:#6e767e;stroke-width:1;opacity:.8}
.gax{stroke:#3c973c;stroke-width:2}.rax{stroke:#98393d;stroke-width:1.600}
.balls circle{fill:url(#ball);stroke:#ef5d6a;stroke-width:1}
.seam{fill:none;stroke:#ff6573;stroke-width:1}
.wire{fill:none;stroke:#2044f5;stroke-width:2}
.gnomon{fill:none;stroke:#666}
.ax{font-size:16px;fill:#666}
.vt{font-size:15px;font-weight:700;fill:#ddd}.vt.w{fill:#fff}
.vtabs{height:30px;flex:none;display:grid;grid-template-columns:105px 48px 54px 55px 30px;padding-left:91px;line-height:29px;color:#777;letter-spacing:-.25px}
.vtabs span{padding-left:6px}
.vtabs .on{width:101px;height:27px;padding-left:13px;background:#303030;border:1px solid #bbb;border-top:0;border-radius:0 0 4px 4px;color:#eee}
.vtabs b{color:#fff;font:13px/30px "DejaVu Sans";padding-left:11px}
.osnap{height:44px;flex:none;background:#303030;display:flex}
.osnap .dots{padding:7px 0 8px}
.checks{display:grid;grid-template-columns:58px 64px 66px 59px 58px 50px 62px 55px 69px 64px 74px 89px 80px;margin-left:4px;height:31px;align-items:center;letter-spacing:-.4px}
.checks label{display:flex;align-items:center;gap:8px;white-space:nowrap}
.checks label::before{content:"";width:14px;height:14px;flex:none;background:#555;outline:1px solid #888;font:bold 15px/14px "DejaVu Sans";color:#fff}
.checks .c::before{content:"✔"}
.rstatus{height:29px;flex:1;background:#303030;display:grid;grid-template-columns:45px 112px 201px 104px 28px 208px 102px 64px 58px 20px;padding-left:6px;align-items:center;border-bottom:1px solid #484848;color:#aaa;letter-spacing:-.35px;white-space:nowrap}
.pane{width:19px;height:19px;border:4px solid #888;border-left-width:8px;border-right-width:3px;background:#303030}
.sw{width:21px;height:21px;background:#000;border:1px solid #ccc}
.rstatus b{background:#0c0c0c;color:#fff;width:89px;height:23px;line-height:22px;text-align:center;border-radius:3px;letter-spacing:-.7px}
.gmenu{height:36px;flex:none;display:grid;grid-template-columns:46px 49px 55px 72px 78px 55px 108px 110px 1fr;padding:0 11px 0 15px;align-items:center;letter-spacing:-.35px;white-space:nowrap;background:linear-gradient(90deg,#f0f0f0,#fbfbfb)}
.gmenu .r{text-align:right}
.gtabs{height:28px;flex:none;display:grid;grid-template-columns:34px repeat(26,35px) 24px;text-align:center;line-height:29px;color:#777;font-size:14px;overflow:hidden}
.gtabs b{background:#fff;color:#111;font-weight:400;border:1px solid #999;border-bottom:0;border-radius:7px 7px 0 0;line-height:25px}
.gtabs i:last-child{text-align:left}
.ribbon{height:41px;flex:none;border-top:1px solid #bbb;border-bottom:2px solid #666;background:linear-gradient(#ccc,#f0f0f0 50%);display:flex;gap:4px;padding:2px 3px 0}
.ribbon span{width:96px;height:18px;border-radius:5px;background:linear-gradient(#333,#161616);color:#fff;font-size:11.500px;line-height:14px;text-align:center;padding-right:14px;position:relative}
.ribbon span::after{content:"✚";position:absolute;right:3px;top:1px;font:9px/14px "DejaVu Sans";color:#999}
.gtool{height:37px;flex:none;background:linear-gradient(#fff,#f3f3f3);display:grid;grid-template-columns:36px 39px 4px 186px 38px 10px 40px 10px 40px 278px 35px 35px 41px 12px 32px 33px 36px 5px 31px 10px;padding:0 0 1px 3px;align-items:center}
.gtool svg{width:28px;height:28px}
.gtool hr{width:1px;height:26px;border:0;background:#bbb;margin:0}
.gtool u{border:3px solid transparent;border-top:4px solid #111;width:0;margin-top:4px}
.combo{height:28px;width:180px;border:1px solid #777;background:#fff;display:flex;align-items:center;justify-content:space-between;padding:0 4px 0 3px;letter-spacing:-.3px}
.gtool .combo svg{width:12px;height:8px}
.sel{width:34px;height:34px;border:1px solid #2077c0;background:#e6f3fc;display:flex;align-items:center;justify-content:center;margin-left:-3px}
.canvas{position:relative;height:823px;flex:none}
.canvas>svg{display:block}
.t text{font-family:"Liberation Sans",Arial,sans-serif;fill:#050505;stroke:#050505;stroke-width:.25}
.fine text{font:bold 5.800px "Liberation Sans",Arial,sans-serif;opacity:.75}
.og{fill:#7d5410}.gn{fill:#27903e}.bl{fill:#5c6094}.rd{fill:#803a40}
.wires path{fill:none;stroke:#c8624c;stroke-width:.8}
.wires.k path{stroke:#555}
.nodes path{fill:#777;stroke:#555;stroke-width:1}
.ghost{font-size:14px;fill:#e3e6e9}
.dock{position:absolute;left:0;bottom:3px;width:184px;height:34px;display:flex;gap:11px;align-items:center;padding-left:6px;background:linear-gradient(#eee,#999);border:1px solid #111;border-right-width:2px;border-left:0}
.dock svg{width:24px;height:24px}
.gstatus{height:26px;flex:1;border-top:1px solid #ddd;display:flex;align-items:center;gap:5px;padding:0 3px 0 3px;letter-spacing:-.35px}
.gstatus em{margin:0 24px 0 auto;color:#777;font-size:14.500px;letter-spacing:-.6px}
.grip{align-self:flex-end}
.taskbar{height:48px;display:flex;background:#1c1c1c}
.start{width:54px;display:flex;align-items:center;justify-content:center;margin-right:3px}
.search{width:360px;background:#333;border:1px solid #5a5a5a;border-bottom:0;border-right:0;display:flex;align-items:center;padding-left:14px;color:#e2e2e2;font-size:18.500px;letter-spacing:-.35px}
.search span{margin:0 auto 0 13px}
.pic{align-self:flex-end}
.rh{fill:currentColor}
.beast{fill:#fff}.gr{fill:#333}.gr .beast{fill:#b5b5b5}
.seven{font-size:15px;fill:#fff}.wip{font:bold 14px "Open Sans",sans-serif;fill:#fff;stroke:#333;stroke-width:2;paint-order:stroke}
.tk{font-size:18px;fill:#eee}.clk{font-size:15px;fill:#fff}
```
FILE: scene.js
```js
const range = (a, b, s) => { const r = []; for (let v = a; v <= b + 1e-6; v += s) r.push(v); return r; };
const nums = s => s.split(' ').map(Number);

// Orthographic construction-plane grids
document.querySelectorAll('[data-grid]').forEach(p => {
  const [cx, cy, s] = nums(p.dataset.grid);
  const [x, y, w, h] = nums(p.ownerSVGElement.getAttribute('viewBox'));
  let d = '';
  range(cx - Math.floor((cx - x) / s) * s, x + w, s).forEach(v => d += `M${v} ${y}v${h}`);
  range(cy - Math.floor((cy - y) / s) * s, y + h, s).forEach(v => d += `M${x} ${v}h${w}`);
  p.setAttribute('d', d);
});

// Perspective ground grid
document.querySelectorAll('[data-persp]').forEach(p => {
  const s = +p.dataset.persp;
  let d = '';
  range(-4, 4, s).forEach(k => {
    d += `M528 ${441.4 + 80 * k + 6.5 * k * k}L952 ${338 + 66 * k + 4 * k * k}`;
    d += `M${659 + 80 * k} 170L${820 + 121 * k} 549`;
  });
  p.setAttribute('d', d);
});

// Circle stacks: eleven rings and ten spokes
document.querySelectorAll('[data-rings]').forEach(g => {
  const [x0, y0, a0, b0, x1, y1, a1, b1, off] = nums(g.dataset.rings);
  let h = '';
  for (let i = 0; i <= 10; i++) {
    const t = i / 10, m = (a, b) => a + (b - a) * t;
    h += `<ellipse cx="${m(x0, x1)}" cy="${m(y0, y1)}" rx="${m(a0, a1)}" ry="${m(b0, b1)}"/>`;
  }
  for (let i = 0; i < 10; i++) {
    const r = (i * 36 + (off ? 0 : 90)) * Math.PI / 180, c = Math.cos(r), s = Math.sin(r);
    h += `<path d="M${x0 + a0 * c} ${y0 + b0 * s}L${x1 + a1 * c} ${y1 + b1 * s}"/>`;
  }
  g.innerHTML = h;
});

// Side elevations of the stack
document.querySelectorAll('[data-frustum]').forEach(g => {
  const [cx, top, bot, a, b] = nums(g.dataset.frustum);
  let d = '';
  for (let i = 0; i <= 10; i++) {
    const w = a + (b - a) * i / 10, y = top + (bot - top) * i / 10;
    d += `M${cx - w} ${y}h${2 * w}`;
  }
  g.innerHTML += `<path d="${d}"/>`;
});

// Miniature panel text
document.querySelectorAll('[data-lines]').forEach(g => {
  const [x, y, dy, max] = nums(g.dataset.lines);
  const lines = g.textContent.split('|');
  g.textContent = '';
  lines.forEach((line, i) => {
    if (!line.trim()) return;
    const t = document.createElementNS('http://www.w3.org/2000/svg', 'text');
    t.setAttribute('x', x + (line.length - line.trimStart().length) * 1.6);
    t.setAttribute('y', y + i * dy);
    t.textContent = line.trim();
    g.appendChild(t);
    if (t.getComputedTextLength() > max) t.setAttribute('textLength', max);
  });
});
```
